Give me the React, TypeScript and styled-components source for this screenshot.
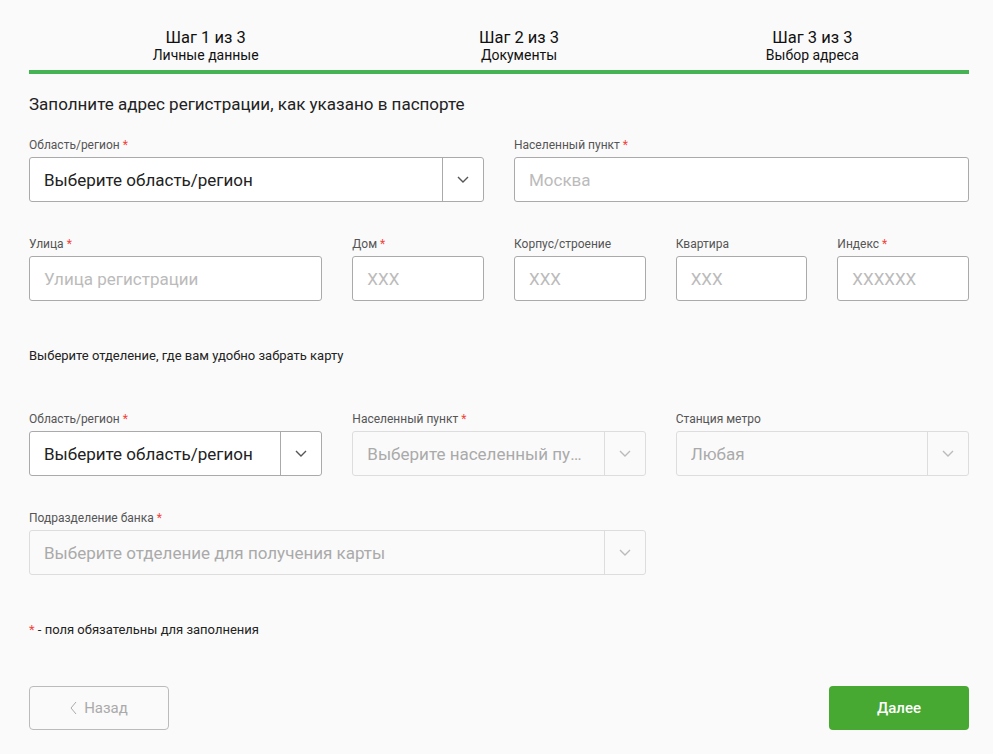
import styled, { createGlobalStyle } from 'styled-components';

const GlobalStyle = createGlobalStyle`
  html, body {
    margin: 0;
    padding: 0;
    background: #fafafa;
    font-family: Roboto, "Liberation Sans", Arial, sans-serif;
    color: #222;
  }
  * { box-sizing: border-box; }
`;

const Page = styled.div`
  width: 940px;
  margin-left: 29px;
  padding-top: 28px;
`;

const Steps = styled.div`
  display: grid;
  grid-template-columns: repeat(3, 1fr);
  border-bottom: 4px solid #45b254;
  padding-bottom: 7px;
`;

const Step = styled.div<{ $shift: number }>`
  display: flex;
  flex-direction: column;
  align-items: center;
  padding-left: ${p => p.$shift}px;
`;

const StepTitle = styled.div`
  font-size: 16.5px;
  line-height: 19px;
  color: #111;
`;

const StepName = styled.div`
  font-size: 14px;
  line-height: 16px;
  color: #111;
`;

const Heading = styled.div`
  font-size: 17px;
  line-height: 20px;
  margin-top: 20px;
  color: #222;
`;

const Grid = styled.div<{ $top: number }>`
  display: grid;
  grid-template-columns: repeat(6, 1fr);
  column-gap: 30px;
  row-gap: 34px;
  margin-top: ${p => p.$top}px;
`;

const Field = styled.div<{ $span: number }>`
  grid-column: span ${p => p.$span};
  display: flex;
  flex-direction: column;
  gap: 4px;
`;

const Label = styled.label`
  font-size: 12px;
  line-height: 16px;
  color: #555;
`;

const Star = styled.span`
  color: #f0443c;
`;

const Box = styled.div<{ $disabled?: boolean }>`
  height: 45px;
  display: flex;
  align-items: stretch;
  background: ${p => (p.$disabled ? '#fafafa' : '#fff')};
  border: 1px solid ${p => (p.$disabled ? '#ddd' : '#aaa')};
  border-radius: 3px;
`;

const Value = styled.div<{ $tone: 'value' | 'placeholder' | 'disabled' }>`
  flex: 1;
  min-width: 0;
  display: flex;
  align-items: center;
  padding-left: 14px;
  padding-right: 14px;
  font-size: 17px;
  white-space: nowrap;
  overflow: hidden;
  color: ${p => (p.$tone === 'value' ? '#222' : p.$tone === 'placeholder' ? '#bbb' : '#aaa')};
`;

const Ellipsis = styled.span`
  overflow: hidden;
  text-overflow: ellipsis;
`;

const Toggle = styled.div<{ $disabled?: boolean }>`
  width: 41px;
  flex-shrink: 0;
  display: flex;
  align-items: center;
  justify-content: center;
  border-left: 1px solid ${p => (p.$disabled ? '#ddd' : '#aaa')};
  color: ${p => (p.$disabled ? '#bbb' : '#555')};
`;

const Note = styled.div`
  font-size: 13px;
  line-height: 17px;
  margin-top: 46px;
  color: #222;
`;

const Footnote = styled.div`
  font-size: 13px;
  line-height: 16px;
  margin-top: 47px;
  color: #222;
`;

const Actions = styled.div`
  display: flex;
  justify-content: space-between;
  margin-top: 48px;
`;

const BackButton = styled.button`
  width: 140px;
  height: 44px;
  border: 1px solid #bbb;
  border-radius: 4px;
  background: transparent;
  color: #aaa;
  font-family: inherit;
  font-size: 15px;
  display: flex;
  align-items: center;
  justify-content: center;
  gap: 7px;
`;

const NextButton = styled.button`
  width: 140px;
  height: 44px;
  border: none;
  border-radius: 4px;
  background: #47a832;
  color: #fff;
  font-family: inherit;
  font-size: 15px;
  font-weight: 500;
`;

const Chevron = ({ dir = 'down' }: { dir?: 'down' | 'left' }) =>
  dir === 'down' ? (
    <svg width="12" height="7" viewBox="0 0 12 7" fill="none">
      <path d="M1 1l5 5 5-5" stroke="currentColor" strokeWidth="1.4" />
    </svg>
  ) : (
    <svg width="7" height="14" viewBox="0 0 7 14" fill="none">
      <path d="M6 1L1 7l5 6" stroke="currentColor" strokeWidth="1" />
    </svg>
  );

type FieldProps = {
  span: number;
  label: string;
  required?: boolean;
  text: string;
  select?: boolean;
  disabled?: boolean;
  filled?: boolean;
};

function FormField({ span, label, required, text, select, disabled, filled }: FieldProps) {
  const tone = disabled ? 'disabled' : filled ? 'value' : 'placeholder';
  return (
    <Field $span={span}>
      <Label>
        {label}
        {required && <Star> *</Star>}
      </Label>
      <Box $disabled={disabled}>
        <Value $tone={tone}>
          <Ellipsis>{text}</Ellipsis>
        </Value>
        {select && (
          <Toggle $disabled={disabled}>
            <Chevron />
          </Toggle>
        )}
      </Box>
    </Field>
  );
}

export default function App() {
  return (
    <>
      <GlobalStyle />
      <Page>
        <Steps>
          <Step $shift={40}>
            <StepTitle>Шаг 1 из 3</StepTitle>
            <StepName>Личные данные</StepName>
          </Step>
          <Step $shift={40}>
            <StepTitle>Шаг 2 из 3</StepTitle>
            <StepName>Документы</StepName>
          </Step>
          <Step $shift={0}>
            <StepTitle>Шаг 3 из 3</StepTitle>
            <StepName>Выбор адреса</StepName>
          </Step>
        </Steps>

        <Heading>Заполните адрес регистрации, как указано в паспорте</Heading>

        <Grid $top={23}>
          <FormField span={3} label="Область/регион" required text="Выберите область/регион" select filled />
          <FormField span={3} label="Населенный пункт" required text="Москва" />
          <FormField span={2} label="Улица" required text="Улица регистрации" />
          <FormField span={1} label="Дом" required text="XXX" />
          <FormField span={1} label="Корпус/строение" text="XXX" />
          <FormField span={1} label="Квартира" text="XXX" />
          <FormField span={1} label="Индекс" required text="XXXXXX" />
        </Grid>

        <Note>Выберите отделение, где вам удобно забрать карту</Note>

        <Grid $top={47}>
          <FormField span={2} label="Область/регион" required text="Выберите область/регион" select filled />
          <FormField span={2} label="Населенный пункт" required text="Выберите населенный пункт" select disabled />
          <FormField span={2} label="Станция метро" text="Любая" select disabled />
          <FormField span={4} label="Подразделение банка" required text="Выберите отделение для получения карты" select disabled />
        </Grid>

        <Footnote>
          <Star>*</Star> - поля обязательны для заполнения
        </Footnote>

        <Actions>
          <BackButton>
            <Chevron dir="left" />
            Назад
          </BackButton>
          <NextButton>Далее</NextButton>
        </Actions>
      </Page>
    </>
  );
}
